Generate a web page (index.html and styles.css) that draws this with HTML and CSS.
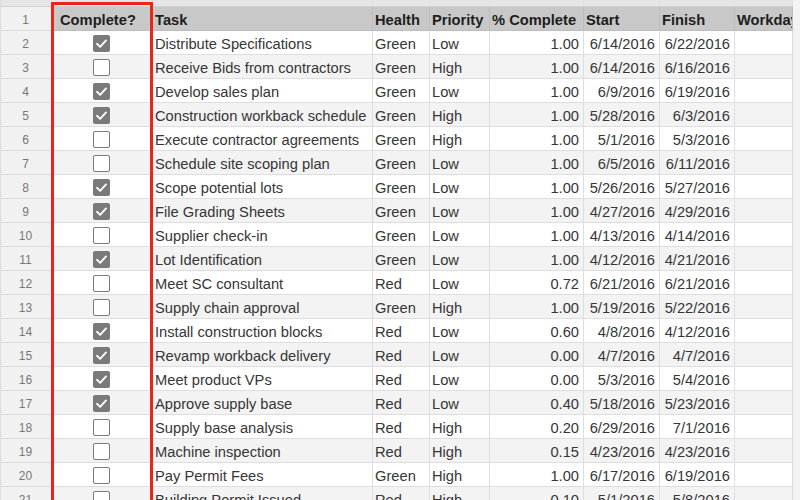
FILE: index.html
```html
<!DOCTYPE html>
<html lang="en">
<head>
  <meta charset="UTF-8" />
  <title>Project Sheet</title>
  <link rel="stylesheet" href="styles.css">
</head>
<body>

  <div class="sheet">
    <table class="grid">
      <colgroup>
        <col class="c-num"><col class="c-done"><col class="c-task"><col class="c-health">
        <col class="c-prio"><col class="c-pct"><col class="c-start"><col class="c-finish"><col class="c-work">
      </colgroup>
      <thead>
        <tr class="letters">
          <th></th><th></th><th></th><th></th><th></th><th></th><th></th><th></th><th></th>
        </tr>
        <tr class="head">
          <th class="num">1</th>
          <th class="done-head">Complete?</th>
          <th>Task</th>
          <th>Health</th>
          <th>Priority</th>
          <th>% Complete</th>
          <th>Start</th>
          <th>Finish</th>
          <th>Workdays</th>
        </tr>
      </thead>
      <tbody id="rows"></tbody>
    </table>
    <div class="highlight"></div>
  </div>

  <script>
    const tasks = [
      [true,  "Distribute Specifications", "Green", "Low", "1.00", "6/14/2016", "6/22/2016"],
      [false, "Receive Bids from contractors", "Green", "High", "1.00", "6/14/2016", "6/16/2016"],
      [true,  "Develop sales plan", "Green", "Low", "1.00", "6/9/2016", "6/19/2016"],
      [true,  "Construction workback schedule", "Green", "High", "1.00", "5/28/2016", "6/3/2016"],
      [false, "Execute contractor agreements", "Green", "High", "1.00", "5/1/2016", "5/3/2016"],
      [false, "Schedule site scoping plan", "Green", "Low", "1.00", "6/5/2016", "6/11/2016"],
      [true,  "Scope potential lots", "Green", "Low", "1.00", "5/26/2016", "5/27/2016"],
      [true,  "File Grading Sheets", "Green", "Low", "1.00", "4/27/2016", "4/29/2016"],
      [false, "Supplier check-in", "Green", "Low", "1.00", "4/13/2016", "4/14/2016"],
      [true,  "Lot Identification", "Green", "Low", "1.00", "4/12/2016", "4/21/2016"],
      [false, "Meet SC consultant", "Red", "Low", "0.72", "6/21/2016", "6/21/2016"],
      [false, "Supply chain approval", "Green", "High", "1.00", "5/19/2016", "5/22/2016"],
      [true,  "Install construction blocks", "Red", "Low", "0.60", "4/8/2016", "4/12/2016"],
      [true,  "Revamp workback delivery", "Red", "Low", "0.00", "4/7/2016", "4/7/2016"],
      [true,  "Meet product VPs", "Red", "Low", "0.00", "5/3/2016", "5/4/2016"],
      [true,  "Approve supply base", "Red", "Low", "0.40", "5/18/2016", "5/23/2016"],
      [false, "Supply base analysis", "Red", "High", "0.20", "6/29/2016", "7/1/2016"],
      [false, "Machine inspection", "Red", "High", "0.15", "4/23/2016", "4/23/2016"],
      [false, "Pay Permit Fees", "Green", "High", "1.00", "6/17/2016", "6/19/2016"],
      [false, "Building Permit Issued", "Red", "High", "0.10", "5/1/2016", "5/8/2016"]
    ];

    const tick = '<svg viewBox="0 0 17 17" width="17" height="17"><path d="M4 8.8 L7.2 11.8 L13 5.4" fill="none" stroke="#fff" stroke-width="1.9" stroke-linecap="round" stroke-linejoin="round"/></svg>';

    function displayRows() {
      const body = document.getElementById("rows");
      body.innerHTML = "";
      tasks.forEach((t, i) => {
        const tr = document.createElement("tr");
        tr.className = i % 2 === 0 ? "even" : "odd";
        tr.innerHTML = `
          <td class="num">${i + 2}</td>
          <td class="center"><span class="box ${t[0] ? 'checked' : ''}">${t[0] ? tick : ''}</span></td>
          <td>${t[1]}</td>
          <td>${t[2]}</td>
          <td>${t[3]}</td>
          <td class="right">${t[4]}</td>
          <td class="right">${t[5]}</td>
          <td class="right">${t[6]}</td>
          <td></td>
        `;
        body.appendChild(tr);
      });
    }

    displayRows();
  </script>

</body>
</html>
```

FILE: styles.css
```css
body {
  margin: 0;
  background-color: #f3f3f3;
  font-family: "Liberation Sans", Arial, sans-serif;
  overflow: hidden;
}

.sheet {
  position: relative;
  width: 792px;
}

.grid {
  border-collapse: collapse;
  table-layout: fixed;
  width: 792px;
  font-size: 14.7px;
  color: #363636;
}

.c-num { width: 52px; }
.c-done { width: 100px; }
.c-task { width: 220px; }
.c-health { width: 57px; }
.c-prio { width: 60px; }
.c-pct { width: 94px; }
.c-start { width: 76px; }
.c-finish { width: 75px; }
.c-work { width: 58px; }

.grid th,
.grid td {
  height: 20px;
  padding: 3px 4px 0 2px;
  border: 1px solid #dedede;
  white-space: nowrap;
  overflow: hidden;
  text-align: left;
  line-height: 20px;
}

.letters th {
  height: 6px;
  padding: 0;
  line-height: 6px;
  background-color: #e6e6e6;
  border-top: none;
  border-bottom: 1px solid #d2d2d2;
}

.head th {
  background-color: #c8c8c8;
  color: #1e1e1e;
  font-weight: bold;
  border-color: #bdbdbd;
}

.head .done-head {
  padding-left: 7px;
}

.even td { background-color: #ffffff; }
.odd td { background-color: #f3f3f3; }

.grid .num,
.head .num {
  background-color: #f1f1f1;
  color: #777;
  font-weight: normal;
  font-size: 12px;
  text-align: center;
  border-color: #dcdcdc;
}

.grid .center { text-align: center; }
.grid .right { text-align: right; }

.box {
  display: inline-block;
  width: 17px;
  height: 17px;
  box-sizing: border-box;
  border: 1.5px solid #7a7a7a;
  border-radius: 2px;
  background-color: #fff;
  vertical-align: middle;
  margin-top: -4px;
}

.box.checked {
  background-color: #7a7a7a;
  border: none;
}

.box svg {
  display: block;
}

.highlight {
  position: absolute;
  left: 51px;
  top: 2px;
  width: 102px;
  height: 520px;
  box-sizing: border-box;
  border: 3px solid #e8261c;
}
```
